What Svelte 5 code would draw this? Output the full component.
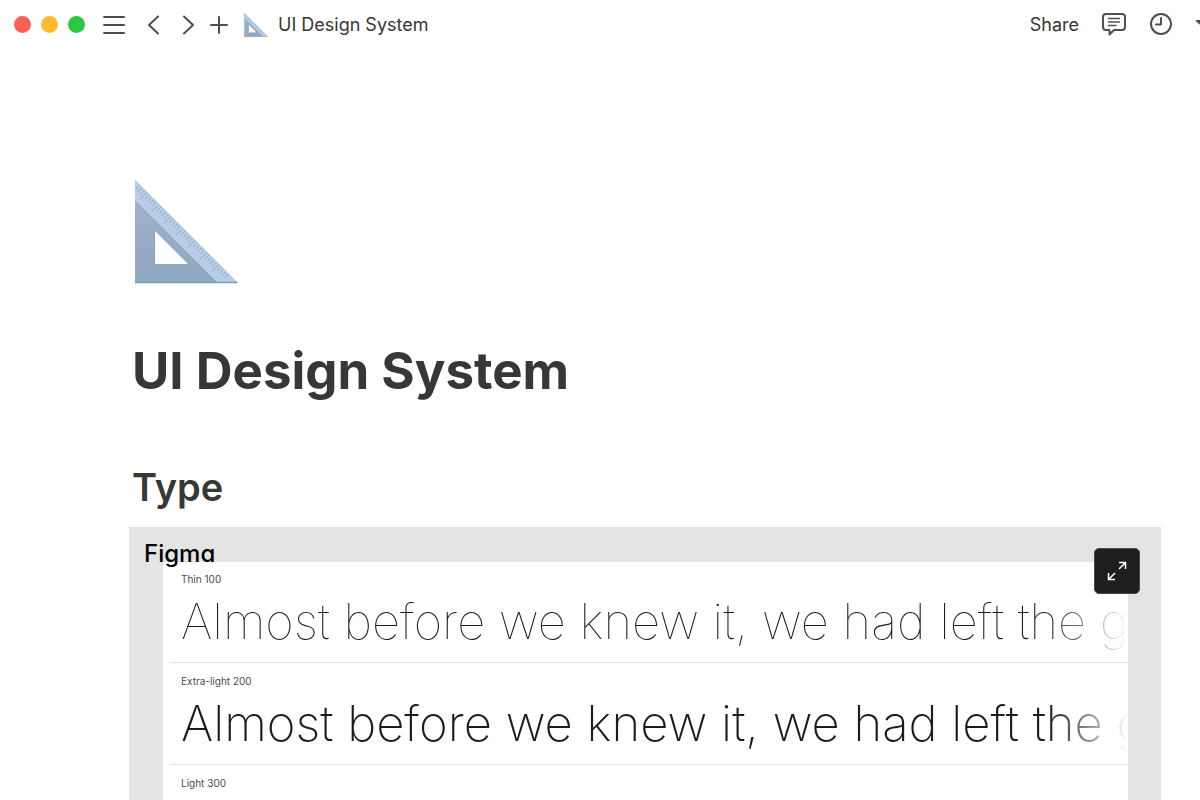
<script lang="ts">
  interface Weight {
    name: string;
    value: number;
  }

  const sample = 'Almost before we knew it, we had left the ground.';

  const weights: Weight[] = [
    { name: 'Thin', value: 100 },
    { name: 'Extra-light', value: 200 },
    { name: 'Light', value: 300 },
  ];

  // ruler marks along the long edge, every fifth one is longer
  const ticks = Array.from({ length: 41 }, (_, i) => {
    const at = 3 + i * 2.4;
    const size = i % 5 === 4 ? 7 : 4;
    return `M${at} ${at}l${-size} ${size}`;
  })
    .slice(1, -2)
    .join('');
</script>

{#snippet triangle()}
  <svg class="triangle" viewBox="0 0 104 104" aria-hidden="true">
    <defs>
      <linearGradient id="body-fill" x1="0" y1="0" x2="0" y2="1">
        <stop offset="0" stop-color="#9fb5ca" />
        <stop offset="1" stop-color="#8fa8c1" />
      </linearGradient>
    </defs>
    <path d="M1 0L104 103H1ZM21 51V84H54Z" fill="url(#body-fill)" fill-rule="evenodd" />
    <path d="M1 0L104 103H84L1 20Z" fill="#b6cfe4" />
    <path d="M1 20L84 103" stroke="#a6bfd6" stroke-width="1" />
    <path d={ticks} stroke="#86a4c0" stroke-width="0.9" />
    <path d="M1 102.500H103" stroke="#8099b3" stroke-width="1.500" />
    <path d="M20.500 50V84.500H55" stroke="#8ba3bb" stroke-width="1" fill="none" />
  </svg>
{/snippet}

<div class="window">
  <header class="topbar">
    <div class="lights">
      <span class="light red"></span>
      <span class="light yellow"></span>
      <span class="light green"></span>
    </div>
    <nav class="nav" aria-label="History">
      <button class="icon-btn" aria-label="Menu">
        <svg width="24" height="24" viewBox="0 0 24 24"><path d="M2 4H22M2 12H22M2 20H22" /></svg>
      </button>
      <button class="icon-btn" aria-label="Back">
        <svg width="12" height="20" viewBox="0 0 12 20"><path d="M10 1.500L1 10L10 18.500" /></svg>
      </button>
      <button class="icon-btn" aria-label="Forward">
        <svg width="12" height="20" viewBox="0 0 12 20"><path d="M2 1.500L11 10L2 18.500" /></svg>
      </button>
      <button class="icon-btn" aria-label="New page">
        <svg width="18" height="18" viewBox="0 0 18 18"><path d="M9 1V17M1 9H17" /></svg>
      </button>
    </nav>
    <a class="crumb" href="#page">
      {@render triangle()}
      <span>UI Design System</span>
    </a>
    <div class="actions">
      <button class="share">Share</button>
      <button class="icon-btn" aria-label="Comments">
        <svg width="24" height="24" viewBox="0 0 24 24">
          <path d="M4 1H20Q23 1 23 4V14Q23 17 20 17H12L7.500 21.500V17H4Q1 17 1 14V4Q1 1 4 1Z" />
          <path class="hair" d="M6.500 5.500H17.500M6.500 9H17.500M6.500 12.500H14" />
        </svg>
      </button>
      <button class="icon-btn" aria-label="Updates">
        <svg width="24" height="24" viewBox="0 0 24 24">
          <circle cx="12" cy="11" r="10" />
          <path d="M12 5V11.500H7" />
        </svg>
      </button>
      <button class="icon-btn" aria-label="Favorite">
        <svg width="24" height="24" viewBox="0 0 24 24">
          <path d="M12 0L15 8H23L17 13L19 21L12 16L5 21L7 13L1 8H9Z" />
        </svg>
      </button>
    </div>
  </header>

  <main class="page" id="page">
    <div class="page-icon">{@render triangle()}</div>
    <h1>UI Design System</h1>
    <h2>Type</h2>

    <section class="embed">
      <span class="brand">Figma</span>
      <button class="expand" aria-label="Expand">
        <svg width="20" height="20" viewBox="0 0 20 20">
          <path d="M12 1.500H18.500V8M18.500 1.500L12 8M1.500 12V18.500H8M1.500 18.500L8 12" />
        </svg>
      </button>
      <div class="sheet">
        {#each weights as weight}
          <div class="row">
            <div class="label">{weight.name} {weight.value}</div>
            <div class="sample" style="font-weight: {weight.value}">{sample}</div>
          </div>
        {/each}
      </div>
    </section>
  </main>
</div>

<style>
  :global(body) {
    background: #fff;
  }

  .window {
    display: flex;
    flex-direction: column;
    height: 100vh;
    overflow: hidden;
    font-family: Inter, "Liberation Sans", sans-serif;
    color: #373735;
  }

  button {
    padding: 0;
    border: 0;
    background: none;
    font: inherit;
    color: inherit;
    cursor: pointer;
  }

  .topbar {
    display: flex;
    flex-shrink: 0;
    align-items: center;
    height: 49px;
    padding-left: 14px;
    font-size: 18px;
  }

  .lights {
    display: flex;
    gap: 10px;
  }

  .light {
    width: 17px;
    height: 17px;
    border-radius: 50%;
  }

  .red {
    background: #fe5f57;
  }

  .yellow {
    background: #febb2e;
  }

  .green {
    background: #28c840;
  }

  .nav {
    display: flex;
    align-items: center;
    gap: 22px;
    margin-left: 17px;
  }

  .nav .icon-btn:last-child {
    margin-left: -6px;
  }

  .icon-btn {
    display: flex;
    flex-shrink: 0;
  }

  .icon-btn svg {
    fill: none;
    stroke: #50504e;
    stroke-width: 2;
    stroke-linecap: round;
    stroke-linejoin: round;
  }

  .icon-btn .hair {
    stroke-width: 1.5;
  }

  .triangle {
    display: block;
    flex-shrink: 0;
    width: 100%;
    height: 100%;
  }

  .crumb {
    display: flex;
    align-items: center;
    gap: 10px;
    margin-left: 16px;
    color: inherit;
    text-decoration: none;
    white-space: nowrap;
  }

  .crumb .triangle {
    width: 24px;
    height: 24px;
  }

  .actions {
    display: flex;
    align-items: center;
    gap: 23px;
    margin-left: auto;
    /* the favorite button runs past the window edge */
    margin-right: -20px;
  }

  .page {
    padding: 131px 39px 0 129px;
  }

  .page-icon {
    width: 104px;
    height: 104px;
    margin-left: 5px;
  }

  h1,
  h2 {
    margin: 0 0 0 3px;
  }

  h1 {
    margin-top: 55px;
    font-size: 51px;
    line-height: 64px;
    font-weight: 700;
  }

  h2 {
    margin-top: 60px;
    font-size: 38px;
    line-height: 48px;
    font-weight: 600;
  }

  .embed {
    position: relative;
    margin-top: 16px;
    padding: 35px 33px 0 34px;
    background: #e4e4e4;
  }

  .brand {
    position: absolute;
    top: 12px;
    left: 15px;
    font-size: 24px;
    line-height: 30px;
    font-weight: 500;
    font-feature-settings: "cv11";
    color: #000;
  }

  .expand {
    position: absolute;
    top: 21px;
    right: 21px;
    display: flex;
    align-items: center;
    justify-content: center;
    width: 46px;
    height: 46px;
    border: 1px solid #4a4a4a;
    border-radius: 5px;
    background: #1e1e1e;
    z-index: 1;
  }

  .expand svg {
    fill: none;
    stroke: #fff;
    stroke-width: 1.5;
  }

  .sheet {
    padding-left: 7px;
    background: #fff;
  }

  .row {
    padding: 9px 0 11px 11px;
  }

  .row + .row {
    padding-top: 10px;
    border-top: 1px solid #e5e5e5;
  }

  .label {
    font-size: 10px;
    line-height: 16px;
    color: #4c4c4c;
  }

  .sample {
    margin-top: 6px;
    overflow: hidden;
    font-size: 49px;
    line-height: 58px;
    white-space: nowrap;
    color: #1c1c1c;
    mask-image: linear-gradient(to left, transparent, #000 80px);
  }
</style>
